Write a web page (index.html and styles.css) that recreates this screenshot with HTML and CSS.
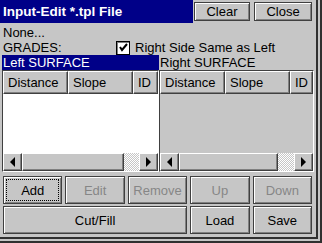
FILE: index.html
```html
<!DOCTYPE html>
<html lang="en">
<head>
    <meta charset="UTF-8">
    <title>Input-Edit *.tpl File</title>
    <link rel="stylesheet" href="styles.css">
</head>
<body>
    <div class="window">
        <div class="titlebar">
            <div class="title">Input-Edit *.tpl File</div>
            <button class="btn btn-clear">Clear</button>
            <button class="btn btn-close">Close</button>
        </div>
        <div class="line">None...</div>
        <div class="line grades">
            <span class="grades-label">GRADES:</span>
            <span class="checkbox">
                <svg width="11" height="11" viewBox="0 0 11 11"><polyline points="2,5 4,8 9,2" fill="none" stroke="#000" stroke-width="2"/></svg>
            </span>
            <span>Right Side Same as Left</span>
        </div>
        <div class="surfaces">
            <div class="surface selected">Left SURFACE</div>
            <div class="surface">Right SURFACE</div>
        </div>
        <div class="lists">
            <div class="list">
                <div class="list-head">
                    <div class="col col-dist">Distance</div>
                    <div class="col col-slope">Slope</div>
                    <div class="col col-id">ID</div>
                </div>
                <div class="list-body"></div>
                <div class="scrollbar">
                    <div class="arrow"><span class="tri-left"></span></div>
                    <div class="thumb thumb-left"></div>
                    <div class="track"></div>
                    <div class="arrow"><span class="tri-right"></span></div>
                </div>
            </div>
            <div class="list disabled">
                <div class="list-head">
                    <div class="col col-dist">Distance</div>
                    <div class="col col-slope">Slope</div>
                    <div class="col col-id">ID</div>
                </div>
                <div class="list-body"></div>
                <div class="scrollbar">
                    <div class="arrow"><span class="tri-left"></span></div>
                    <div class="thumb thumb-right"></div>
                    <div class="track"></div>
                    <div class="arrow"><span class="tri-right"></span></div>
                </div>
            </div>
        </div>
        <div class="buttons">
            <button class="btn focused">Add</button>
            <button class="btn" disabled>Edit</button>
            <button class="btn" disabled>Remove</button>
            <button class="btn" disabled>Up</button>
            <button class="btn" disabled>Down</button>
            <button class="btn wide">Cut/Fill</button>
            <button class="btn">Load</button>
            <button class="btn">Save</button>
        </div>
    </div>
</body>
</html>
```

FILE: styles.css
```css
* {
    box-sizing: border-box;
}
body {
    margin: 0;
    font-family: "Liberation Sans", Arial, sans-serif;
    font-size: 13px;
    color: #000000;
    background-color: #c6c6c6;
}
.window {
    width: 322px;
    height: 243px;
    background-color: #c6c6c6;
    border-right: 6px double #303030;
    border-bottom: 6px double #303030;
    overflow: hidden;
}
.titlebar {
    display: flex;
    align-items: center;
    height: 23px;
}
.title {
    width: 193px;
    height: 23px;
    line-height: 23px;
    padding-left: 3px;
    background-color: #000088; /* azul da barra */
    color: #ffffff;
    font-weight: bold;
    font-size: 13.5px;
    white-space: nowrap;
}
.btn {
    font: inherit;
    color: #000000;
    background-color: #c6c6c6;
    border: 1px solid #404040;
    box-shadow: inset 1px 1px #ffffff, inset -1px -1px #808080;
    padding: 0;
}
.btn:disabled {
    color: #868686;
}
.titlebar .btn {
    height: 19px;
}
.btn-clear {
    width: 56px;
    margin-left: 1px;
}
.btn-close {
    width: 58px;
    margin-left: 4px;
}
.line {
    height: 17px;
    line-height: 17px;
    padding-left: 3px;
    padding-top: 1px;
}
.grades {
    display: flex;
    align-items: center;
    height: 15px;
    padding-top: 0;
}
.grades-label {
    width: 113px;
}
.checkbox {
    display: flex;
    align-items: center;
    justify-content: center;
    width: 14px;
    height: 14px;
    margin-right: 5px;
    background-color: #ffffff;
    border: 1px solid #000000;
    box-shadow: inset 1px 1px #808080;
}
.surfaces,
.lists {
    display: grid;
    grid-template-columns: 157px 155px;
    margin-left: 2px;
}
.surface {
    height: 15px;
    line-height: 15px;
    padding-left: 1px;
    white-space: nowrap;
}
.surface.selected {
    background-color: #000088;
    color: #ffffff;
}
.list {
    display: flex;
    flex-direction: column;
    height: 102px;
    border: 1px solid;
    border-color: #404040 #ffffff #ffffff #404040;
    overflow: hidden;
}
.list-head {
    display: flex;
    height: 23px;
    flex: none;
}
.col {
    height: 23px;
    line-height: 21px;
    padding-left: 4px;
    border: 1px solid;
    border-color: #ffffff #404040 #404040 #ffffff;
    box-shadow: inset -1px -1px #808080;
    white-space: nowrap;
    overflow: hidden;
}
.col-dist {
    width: 65px;
}
.col-slope {
    width: 65px;
}
.col-id {
    flex: 1;
}
.list-body {
    flex: 1;
    background-color: #ffffff;
}
.disabled .list-body {
    background-color: #c6c6c6;
}
.scrollbar {
    display: flex;
    height: 18px;
    flex: none;
}
.arrow {
    display: flex;
    align-items: center;
    justify-content: center;
    width: 19px;
    border: 1px solid;
    border-color: #ffffff #404040 #404040 #ffffff;
    box-shadow: inset -1px -1px #808080;
    background-color: #c6c6c6;
}
.tri-left {
    border-top: 5px solid transparent;
    border-bottom: 5px solid transparent;
    border-right: 5px solid #000000;
}
.tri-right {
    border-top: 5px solid transparent;
    border-bottom: 5px solid transparent;
    border-left: 5px solid #000000;
}
.thumb {
    border: 1px solid;
    border-color: #ffffff #404040 #404040 #ffffff;
    box-shadow: inset -1px -1px #808080;
    background-color: #c6c6c6;
}
.thumb-left {
    width: 102px;
}
.thumb-right {
    width: 99px;
}
.track {
    flex: 1;
    background: repeating-conic-gradient(#ffffff 0 25%, #c6c6c6 0 50%) 0 0 / 2px 2px;
}
.buttons {
    display: grid;
    grid-template-columns: repeat(5, 1fr);
    grid-auto-rows: 28px;
    gap: 2px 3px;
    margin-top: 4px;
    padding: 0 4px 0 3px;
}
.wide {
    grid-column: span 3;
}
.focused {
    outline: 1px dotted #000000;
    outline-offset: -4px;
}
```
